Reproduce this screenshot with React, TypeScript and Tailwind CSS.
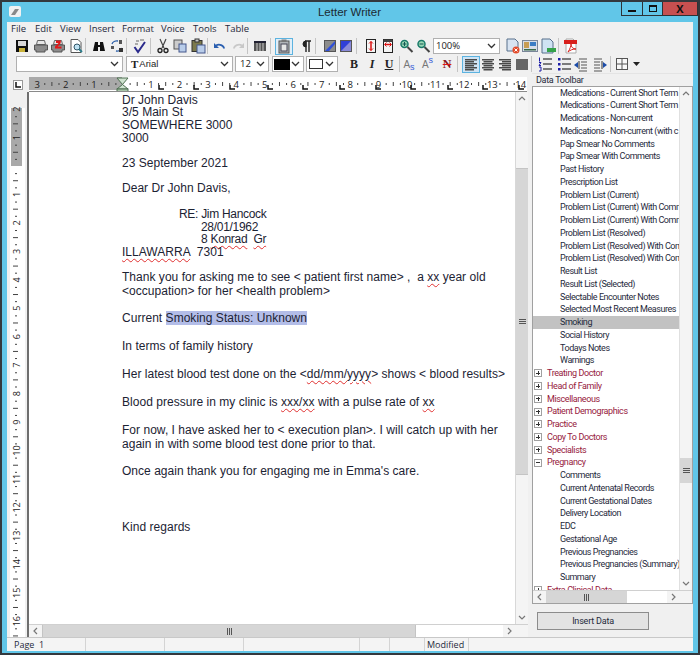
import React from "react";

const S = ({ children, w = 16 }: { children: React.ReactNode; w?: number }) => (
  <svg width={w} height={16} viewBox={`0 0 ${w} 16`} className="block shrink-0">{children}</svg>
);

const Save = () => <S><rect x="2" y="2" width="12" height="12" fill="#111" /><rect x="4" y="3" width="8" height="5" fill="#d8d8d8" /><rect x="5" y="10" width="6" height="4" fill="#c9b23a" /></S>;
const Print = ({ red }: { red?: boolean }) => <S><path d="M4.500 2.500h7l1 4h-9z" fill="#e6e6e6" stroke="#666" /><path d="M1.500 7h13v5h-2.500v2H3v-2H1.500z" fill="#8c8c8c" stroke="#555" />{red && <path d="M6 2.500h5l-.5 3-3 3h4v2H5v-2l3.500-3.500H6z" fill="#e01818" />}</S>;
const Preview = () => <S><path d="M3 1.500h7l3 3v10H3z" fill="#fff" stroke="#555" /><circle cx="9" cy="9" r="3" fill="#bfe3f4" stroke="#356" /><path d="M11 11l3 3" stroke="#2a7d8c" strokeWidth="1.800" /></S>;
const Binoc = () => <S><path d="M2 13l2-9h3v3h2V4h3l2 9H9V9H7v4z" fill="#111" /></S>;
const Replace = () => <S><path d="M3 6a5 4 0 0 1 6-3" fill="none" stroke="#2a5ea8" strokeWidth="1.300" /><path d="M13 10a5 4 0 0 1-6 3" fill="none" stroke="#2a5ea8" strokeWidth="1.300" /><rect x="10" y="2" width="3" height="4" fill="#555" /><rect x="10" y="10" width="4" height="4" fill="#333" /><rect x="2" y="8" width="3" height="3" fill="#555" /></S>;
const Check = () => <S><path d="M2.500 9l3.500 5 7-10" fill="none" stroke="#2a2a8c" strokeWidth="2" /><path d="M4 3h3M8 2h4M3 6h3" stroke="#666" /></S>;
const Cut = () => <S><path d="M5 1l4 9M11 1L7 10" stroke="#444" strokeWidth="1.200" /><circle cx="5" cy="12.500" r="2" fill="none" stroke="#222" strokeWidth="1.300" /><circle cx="11" cy="12.500" r="2" fill="none" stroke="#222" strokeWidth="1.300" /></S>;
const Copy = () => <S><rect x="2" y="2" width="8" height="9" fill="#ccc" stroke="#555" /><rect x="7" y="6" width="7" height="8" fill="#b9cdea" stroke="#44578c" /></S>;
const Paste = () => <S><rect x="2" y="2.500" width="10" height="11" fill="#7c7a4d" stroke="#333" /><rect x="5" y="1" width="4" height="3" fill="#ccc" stroke="#333" /><rect x="7" y="7" width="8" height="8" fill="#b9cdea" stroke="#44578c" /></S>;
const Undo = () => <S><path d="M4 7.500a5 4 0 0 1 8 3" fill="none" stroke="#2a5fb0" strokeWidth="1.800" /><path d="M2 5v5h5z" fill="#2a5fb0" /></S>;
const Redo = () => <S><path d="M12 7.500a5 4 0 0 0-8 3" fill="none" stroke="#c8c8c8" strokeWidth="1.800" /><path d="M14 5v5H9z" fill="#c8c8c8" /></S>;
const Columns = () => <S><rect x="2" y="3" width="12" height="10" fill="#555" /><rect x="2" y="3" width="12" height="2" fill="#223" /><path d="M5 5v8M8 5v8M11 5v8" stroke="#ccc" /></S>;
const PageBox = () => <S><rect x="3" y="3" width="10" height="12" fill="#b0b4b8" stroke="#555" /><rect x="5.500" y="1.500" width="5" height="2.500" fill="#777" /><rect x="5" y="6" width="6" height="7" fill="#e6e6e6" stroke="#445" /></S>;
const Pilcrow = () => <S><path d="M7 3h6M8 3v11M11 3v11" stroke="#222" strokeWidth="1.400" /><path d="M8 3a3 3 0 0 0 0 6z" fill="#222" stroke="#222" /></S>;
const Shade = ({ dark }: { dark?: boolean }) => <S><rect x="2.500" y="2.500" width="11" height="11" fill={dark ? "#8a8ad8" : "#8c8c8c"} stroke="#555" />{dark ? <path d="M3 13V3h10z" fill="#2f3fd8" /> : <path d="M3 13L13 3v3l-6 7z" fill="#2f4fd8" />}</S>;
const PageH = () => <S><rect x="3.500" y="1.500" width="9" height="13" fill="#f4f4f4" stroke="#222" /><path d="M8 3.500v9" stroke="#d11" strokeWidth="1.500" /><path d="M6 5.500l2-2 2 2M6 10.500l2 2 2-2" fill="none" stroke="#d11" /></S>;
const PageW = () => <S><rect x="3.500" y="1.500" width="9" height="13" fill="#f4f4f4" stroke="#222" /><rect x="3.500" y="1.500" width="9" height="2.500" fill="#444" /><path d="M5 6.500h6" stroke="#d11" strokeWidth="1.500" /><path d="M6.500 4.500l-2 2 2 2M9.500 4.500l2 2-2 2" fill="none" stroke="#d11" /></S>;
const Zoom = ({ plus }: { plus?: boolean }) => <S><circle cx="6.500" cy="6" r="3.500" fill="#9ad8b4" stroke="#197a6a" strokeWidth="1.500" /><path d="M9.500 9l5 5" stroke="#444" strokeWidth="2" /><path d={plus ? "M4.500 6h4M6.500 4v4" : "M4.500 6h4"} stroke="#155" /></S>;
const DocX = () => <S w={18}><path d="M4 1h8l3 3v9H4z" fill="#d8e4f2" stroke="#58708c" /><circle cx="13" cy="12" r="3.500" fill="#e24b2b" /><path d="M11.500 10.500l3 3M14.500 10.500l-3 3" stroke="#fff" /></S>;
const Photo = () => <S w={18}><rect x="1.500" y="2.500" width="15" height="11" fill="#d7dee8" stroke="#7a8699" /><rect x="3" y="4" width="5" height="6" fill="#c89d54" /><rect x="9" y="4" width="6" height="4" fill="#3b7dc4" /><rect x="3" y="11" width="12" height="1.500" fill="#3b6b4a" /></S>;
const DocG = () => <S w={18}><path d="M3 1h8l3 3v11H3z" fill="#cfe3f3" stroke="#58708c" /><rect x="8" y="10" width="9" height="4" fill="#35a24a" /></S>;
const Pdf = () => <S><path d="M3 1h7l3 3v11H3z" fill="#fff" stroke="#aaa" /><rect x="1" y="2" width="13" height="4" fill="#d8201c" /><path d="M5 14c2-3 3-6 3-8 0 3 2 5 5 5-3 0-6 1-8 3z" fill="none" stroke="#d8201c" /></S>;
const Align = ({ kind }: { kind: "l" | "c" | "r" | "j" }) => {
  if (kind === "j") return <S><rect x="2" y="3" width="12" height="11" fill="#666" /></S>;
  const rows = [3, 5, 7, 9, 11, 13];
  return <S>{rows.map((y, i) => {
    const short = i % 2 === 1;
    const len = short ? 9 : 12;
    const x = kind === "l" ? 2 : kind === "r" ? 14 - len : 8 - len / 2;
    return <rect key={y} x={x} y={y} width={len} height="1.500" fill="#4a4a4a" />;
  })}</S>;
};
const Numbered = () => <S><path d="M6 3h9M6 8h9M6 13h9" stroke="#555" strokeWidth="1.500" /><path d="M2.500 1.500v4M2 6.500h2l-2 3h2M2 11h2v4H2" fill="none" stroke="#1c1ca8" /></S>;
const Bullets = () => <S><path d="M6 3h9M6 8h9M6 13h9" stroke="#555" strokeWidth="1.500" /><rect x="2" y="2" width="2.500" height="2.500" fill="#1c1ca8" /><rect x="2" y="7" width="2.500" height="2.500" fill="#1c1ca8" /><rect x="2" y="12" width="2.500" height="2.500" fill="#1c1ca8" /></S>;
const Outdent = () => <S><path d="M7 3h8M9 6h6M9 9h6M9 12h6M7 15h8" stroke="#555" /><path d="M6 6v6L2 9z" fill="#1c4ca8" /><path d="M7 5v8" stroke="#333" /></S>;
const Indent = () => <S><path d="M1 3h8M1 6h6M1 9h6M1 12h6M1 15h8" stroke="#555" /><path d="M10 6v6l4-3z" fill="#1c4ca8" /><path d="M9 5v8" stroke="#333" /></S>;
const Grid = () => <S><rect x="2.500" y="2.500" width="11" height="11" fill="#f8f8f8" stroke="#555" /><path d="M8 2.500v11M2.500 8h11" stroke="#555" /></S>;

const Sep = ({ c = "mx-[2px]" }: { c?: string }) => <div className={`w-px h-[16px] bg-[#c4c4c4] shrink-0 ${c}`} />;
const Chev = ({ c = "#333" }: { c?: string }) => (
  <svg width="9" height="6" viewBox="0 0 9 6" className="block shrink-0"><path d="M1 1l3.500 3.500L8 1" fill="none" stroke={c} strokeWidth="1.300" /></svg>
);
const Arrow = ({ d }: { d: "u" | "d" | "l" | "r" }) => {
  const p = { u: "M1 5l3-3 3 3", d: "M1 2l3 3 3-3", l: "M5 1L2 4l3 3", r: "M2 1l3 3-3 3" }[d];
  return <svg width="8" height="8" viewBox="0 0 8 8" className="block"><path d={p} fill="none" stroke="#777" strokeWidth="1.200" /></svg>;
};
const Combo = ({ w, children }: { w: string; children?: React.ReactNode }) => (
  <div className={`${w} h-[16px] bg-white border border-[#b0b0b0] flex items-center justify-between pr-[3px] shrink-0`}>
    <div className="flex items-center min-w-0">{children}</div>
    <Chev />
  </div>
);
const Grip = () => <div className="flex gap-px"><i className="block w-px h-[7px] bg-[#555]" /><i className="block w-px h-[7px] bg-[#555]" /><i className="block w-px h-[7px] bg-[#555]" /></div>;
const GripH = () => <div className="flex flex-col gap-px"><i className="block h-px w-[7px] bg-[#555]" /><i className="block h-px w-[7px] bg-[#555]" /><i className="block h-px w-[7px] bg-[#555]" /></div>;

function TopRuler() {
  const cm = 28.45, zero = 93.5;
  const ticks: React.ReactNode[] = [];
  for (let i = -3; i <= 14; i++) {
    const x = zero + i * cm;
    for (let k = 1; k < 4; k++) {
      const tx = x + (k * cm) / 4;
      if (tx < 490)
        ticks.push(<rect key={`${i}-${k}`} x={tx} y={k === 2 ? 5 : 6} width="1" height={k === 2 ? 4 : 2} fill="#444" />);
    }
    if (i !== 0)
      ticks.push(<text key={i} x={x} y="11" fontSize="9.500" textAnchor="middle" fontFamily="'Open Sans',sans-serif" fill="#222">{Math.abs(i)}</text>);
  }
  const tabs = [130, 165, 201, 239, 274, 311, 347, 382, 419, 454, 490];
  return (
    <svg width="498" height="15" viewBox="0 0 498 15" className="block">
      <rect width="498" height="15" fill="#fff" />
      <rect width="93" height="13" y="0" fill="#a9a9a9" />
      {ticks}
      {tabs.map(t => <path key={t} d="M0 8v4h5" transform={`translate(${t} 0)`} fill="none" stroke="#111" strokeWidth="1.500" />)}
      <path d="M88 1h11l-5.500 6.500zM93.500 7.500L88 12h11z" fill="#cfe3cf" stroke="#4f6f52" />
      <rect x="88" y="12" width="11" height="3" fill="#a8c4a8" stroke="#4f6f52" />
      <rect y="14" width="498" height="1" fill="#8a8a8a" />
    </svg>
  );
}
function LeftRuler() {
  const cm = 28.45, zero = 166;
  const items: React.ReactNode[] = [];
  for (let i = -2; i <= 17; i++) {
    const y = zero + i * cm - 92;
    for (let k = 1; k < 4; k++) {
      const ty = y + (k * cm) / 4;
      if (ty > 14) items.push(<rect key={`${i}-${k}`} x={k === 2 ? 6 : 8} y={ty} width={k === 2 ? 5 : 2} height="1" fill="#444" />);
    }
    if (i !== 0 && y > 10)
      items.push(<text key={i} x="9" y={y + 4} fontSize="9" textAnchor="middle" transform={`rotate(-90 9 ${y})`} fontFamily="'Open Sans',sans-serif" fill="#222">{Math.abs(i)}</text>);
  }
  return (
    <svg width="20" height="545" viewBox="0 0 20 545" className="block shrink-0">
      <rect width="20" height="545" fill="#f0f0f0" />
      <rect x="3" y="0" width="15" height="545" fill="#fff" />
      <rect x="3" y="0" width="15" height="16" fill="#f0f0f0" />
      <rect x="4" y="16" width="11" height="58" fill="#a9a9a9" />
      {items}
    </svg>
  );
}

const Sq = ({ children }: { children: React.ReactNode }) => (
  <span className="underline decoration-wavy decoration-[#e03030] decoration-1 underline-offset-2">{children}</span>
);

const leaves1 = [
  "Medications - Current Short Term", "Medications - Current Short Term", "Medications - Non-current", "Medications - Non-current (with c",
  "Pap Smear No Comments", "Pap Smear With Comments", "Past History", "Prescription List", "Problem List (Current)",
  "Problem List (Current) With Comm", "Problem List (Current) With Comm", "Problem List (Resolved)", "Problem List (Resolved) With Com",
  "Problem List (Resolved) With Com", "Result List", "Result List (Selected)", "Selectable Encounter Notes", "Selected Most Recent Measures",
  "Smoking", "Social History", "Todays Notes", "Warnings",
];
const groups = ["Treating Doctor", "Head of Family", "Miscellaneous", "Patient Demographics", "Practice", "Copy To Doctors", "Specialists"];
const leaves2 = ["Comments", "Current Antenatal Records", "Current Gestational Dates", "Delivery Location", "EDC", "Gestational Age", "Previous Pregnancies", "Previous Pregnancies (Summary)", "Summary"];

const Box = ({ open }: { open?: boolean }) => (
  <span className="w-[8px] h-[8px] border border-[#a0a0a0] bg-white flex items-center justify-center relative shrink-0">
    <i className="block w-[4px] h-px bg-[#333]" />
    {!open && <i className="absolute left-[2.500px] top-[1px] block w-px h-[4px] bg-[#333]" />}
  </span>
);
const Leaf = ({ t, sel }: { t: string; sel?: boolean }) => (
  <div className={`h-[12.760px] leading-[12.760px] pl-[27px] whitespace-nowrap tracking-[-0.450px] text-[#1f2a3c] ${sel ? "bg-[#c2c2c2]" : ""}`}>{t}</div>
);
const Group = ({ t, open }: { t: string; open?: boolean }) => (
  <div className="h-[12.760px] flex items-center whitespace-nowrap tracking-[-0.400px] text-[#96203c] leading-[12.760px]">
    <span className="ml-[1px] mr-[5px]"><Box open={open} /></span>{t}
  </div>
);

export default function App() {
  return (
    <div className="w-[700px] h-[655px] bg-[#33383d] p-[2px] overflow-hidden font-['Open_Sans',sans-serif]">
      <div className="h-full bg-[#61c6e8] flex flex-col">
        <div className="h-[20px] flex items-start relative shrink-0">
          <div className="ml-[7px] mt-[4px] w-[12px] h-[11px] bg-[#f2f2f2] rounded-[2px] flex items-center justify-center">
            <svg width="10" height="8" viewBox="0 0 10 8"><path d="M1 7l4-6h4L5 7z" fill="#8a8a8a" /></svg>
          </div>
          <div className="absolute left-0 right-[1px] top-[2px] text-center font-['Liberation_Sans',sans-serif] text-[11.500px] leading-[17px] text-[#1c2a33]">Letter Writer</div>
          <div className="ml-auto flex h-[14px] border border-t-0 border-[#2d3236]">
            <div className="w-[21px] flex items-end justify-center pb-[3px] border-r border-[#2d3236]"><i className="block w-[8px] h-[2px] bg-[#111]" /></div>
            <div className="w-[20px] flex items-center justify-center border-r border-[#2d3236]"><i className="block w-[8px] h-[7px] border border-t-2 border-[#111]" /></div>
            <div className="w-[34px] bg-[#c75050] flex items-center justify-center text-[11px] font-bold leading-none text-[#111]">X</div>
          </div>
        </div>
        <div className="flex-1 mx-[5px] mb-[2px] bg-[#f0f0f0] flex flex-col min-h-0 font-['Roboto',sans-serif] text-[9px] text-[#222]">
          <div className="h-[15px] flex items-center font-['Open_Sans',sans-serif] text-[9.500px] pl-[4px] shrink-0 text-[#1f2a3c]">
            <span className="w-[24px]">File</span><span className="w-[25px]">Edit</span><span className="w-[29px]">View</span><span className="w-[33px]">Insert</span><span className="w-[39px]">Format</span><span className="w-[32px]">Voice</span><span className="w-[32px]">Tools</span><span>Table</span>
          </div>
          <div className="h-[18px] flex items-center pl-[7px] shrink-0">
            <Save /><span className="w-[3px]" /><Print /><span className="w-px" /><Print red /><span className="w-[2px]" /><Preview />
            <Sep c="mx-[1px]" /><span className="w-[4px]" /><Binoc /><span className="w-[2px]" /><Replace />
            <Sep c="mx-[1px]" /><span className="w-[4px]" /><Check /><span className="w-px" />
            <Sep c="mx-[1px]" /><span className="w-[3px]" /><Cut /><span className="w-px" /><Copy /><span className="w-[2px]" /><Paste />
            <Sep c="mx-[1px]" /><span className="w-[3px]" /><Undo /><span className="w-[2px]" /><Redo />
            <Sep c="mx-[1px]" /><span className="w-[3px]" /><Columns />
            <Sep c="ml-[2px] mr-[2px]" /><span className="w-[2px]" />
            <div className="w-[18px] h-[17px] border border-[#5cb3e0] bg-[#e0eef8] flex items-center justify-center mr-[5px] shrink-0"><PageBox /></div>
            <Pilcrow /><Sep c="ml-[1px] mr-[6px]" /><Shade /><Shade dark />
            <Sep c="mx-[2px]" /><span className="w-[4px]" /><PageH /><span className="w-px" /><PageW /><span className="w-[2px]" /><Zoom plus /><span className="w-px" /><Zoom />
            <span className="w-[2px]" />
            <Combo w="w-[67px]"><span className="pl-[2px] font-['Open_Sans',sans-serif] text-[9.500px] leading-none">100%</span></Combo>
            <span className="w-[3px]" /><DocX /><Photo /><DocG /><Sep c="mx-[1px]" /><span className="w-[3px]" /><Pdf />
          </div>
          <div className="h-[18px] flex items-center pl-[9px] shrink-0">
            <Combo w="w-[107px]" /><span className="w-[3px]" />
            <Combo w="w-[107px]">
              <span className="pl-[4px] font-['Liberation_Serif',serif] text-[11px] font-bold leading-none mr-[1px]">T</span>
              <span className="font-['Liberation_Sans',sans-serif] text-[9.500px] leading-none">Arial</span>
            </Combo>
            <span className="w-[2px]" />
            <Combo w="w-[34px]"><span className="pl-[4px] font-['Open_Sans',sans-serif] text-[9.500px] leading-none">12</span></Combo>
            <span className="w-[3px]" />
            <div className="w-[32px] h-[16px] bg-white border border-[#b0b0b0] flex items-center pl-[1px] pr-[3px] justify-between shrink-0"><i className="block w-[16px] h-[11px] bg-black" /><Chev /></div>
            <span className="w-[2px]" />
            <div className="w-[32px] h-[16px] bg-white border border-[#b0b0b0] flex items-center pl-[2px] pr-[3px] justify-between shrink-0"><i className="block w-[14px] h-[10px] bg-white border border-[#333]" /><Chev /></div>
            <span className="w-[7px]" />
            <span className="w-[18px] text-center font-['Liberation_Serif',serif] font-bold text-[12px] text-[#222]">B</span>
            <span className="w-[18px] text-center font-['Liberation_Serif',serif] font-bold italic text-[12px] text-[#222]">I</span>
            <span className="w-[16px] text-center font-['Liberation_Serif',serif] font-bold underline text-[12px] text-[#222]">U</span>
            <Sep c="ml-[2px] mr-0" />
            <span className="w-[18px] text-center font-['Liberation_Sans',sans-serif] text-[10px] text-[#777]">A<sub className="text-[9px] text-[#3a5fd8]">s</sub></span>
            <span className="w-[19px] text-center font-['Liberation_Sans',sans-serif] text-[10px] text-[#777]">A<sup className="text-[9px] text-[#3a5fd8]">s</sup></span>
            <span className="w-[20px] text-center font-['Liberation_Serif',serif] font-bold text-[12px] text-[#8a1818] line-through decoration-[#e01818]">N</span>
            <Sep c="mr-[4px]" />
            <div className="w-[18px] h-[17px] border border-[#5cb3e0] bg-[#cfe4f5] flex items-center justify-center shrink-0"><Align kind="l" /></div>
            <Align kind="c" /><span className="w-[1px]" /><Align kind="r" /><span className="w-[1px]" /><Align kind="j" />
            <Sep c="ml-[1px] mr-[5px]" />
            <Numbered /><span className="w-[3px]" /><Bullets /><Outdent /><span className="w-[5px]" /><Indent />
            <Sep c="ml-[1px] mr-[3px]" />
            <Grid /><span className="w-[2px]" /><svg width="8" height="5" viewBox="0 0 8 5" className="ml-px"><path d="M0 0h7L3.500 4z" fill="#222" /></svg>
          </div>
          <div className="flex-1 flex min-h-0">
            <div className="w-[521px] flex flex-col shrink-0 min-h-0">
              <div className="h-[19px] flex items-end shrink-0">
                <div className="w-[22px] h-[15px] flex items-center justify-center">
                  <div className="w-[10px] h-[10px] bg-white border border-[#999] flex items-center justify-center"><svg width="6" height="6" viewBox="0 0 6 6"><path d="M1 0v5h5" fill="none" stroke="#111" strokeWidth="1.500" /></svg></div>
                </div>
                <TopRuler />
              </div>
              <div className="flex-1 flex min-h-0">
                <LeftRuler />
                <div className="w-[2px] bg-[#6e6e6e] shrink-0" />
                <div className="flex-1 flex flex-col min-w-0 min-h-0">
                  <div className="flex-1 flex min-h-0">
                    <div className="flex-1 bg-white pl-[93px] pt-[1.500px] font-['Liberation_Sans',sans-serif] text-[12px] tracking-[0.030px] text-[#1c2333] whitespace-pre overflow-hidden">
                      <div className="leading-[12.700px]">
                        <p>Dr John Davis</p>
                        <p>3/5 Main St</p>
                        <p>SOMEWHERE 3000</p>
                        <p>3000</p>
                        <p>&nbsp;</p>
                        <p>23 September 2021</p>
                        <p>&nbsp;</p>
                        <p>Dear Dr John Davis,</p>
                        <p>&nbsp;</p>
                        <p className="pl-[57px] tracking-[-0.300px]">RE: Jim Hancock</p>
                        <p className="pl-[79px] tracking-[-0.300px]">28/01/1962</p>
                        <p className="pl-[79px] tracking-[-0.300px]">8 <Sq>Konrad</Sq>  <Sq>Gr</Sq></p>
                        <p><Sq>ILLAWARRA</Sq>  7301</p>
                      </div>
                      <div className="leading-[13.900px] mt-[12px]">
                        <p>Thank you for asking me to see &lt; patient first name&gt; ,  a <Sq>xx</Sq> year old</p>
                        <p>&lt;occupation&gt; for her &lt;health problem&gt;</p>
                        <p>&nbsp;</p>
                        <p>Current <span className="bg-[#b3bde8]">Smoking Status: Unknown</span></p>
                        <p>&nbsp;</p>
                        <p>In terms of family history</p>
                        <p>&nbsp;</p>
                        <p>Her latest blood test done on the &lt;<Sq>dd/mm/yyyy</Sq>&gt; shows &lt; blood results&gt;</p>
                        <p>&nbsp;</p>
                        <p>Blood pressure in my clinic is <Sq>xxx/xx</Sq> with a pulse rate of <Sq>xx</Sq></p>
                        <p>&nbsp;</p>
                        <p>For now, I have asked her to &lt; execution plan&gt;. I will catch up with her</p>
                        <p>again in with some blood test done prior to that.</p>
                        <p>&nbsp;</p>
                        <p>Once again thank you for engaging me in Emma's care.</p>
                        <p>&nbsp;</p>
                        <p>&nbsp;</p>
                        <p>&nbsp;</p>
                        <p>Kind regards</p>
                      </div>
                    </div>
                    <div className="w-[13px] bg-[#f4f4f4] border-l border-[#d8d8d8] flex flex-col shrink-0">
                      <div className="h-[13px] flex items-center justify-center shrink-0"><Arrow d="u" /></div>
                      <div className="flex-1 flex flex-col">
                        <div className="h-[63px]" />
                        <div className="h-[307px] bg-[#d6d6d6] border-y border-[#c4c4c4] flex items-center justify-center"><GripH /></div>
                      </div>
                      <div className="h-[13px] flex items-center justify-center shrink-0"><Arrow d="d" /></div>
                    </div>
                  </div>
                  <div className="h-[13px] flex bg-[#f4f4f4] shrink-0 border-t border-[#d0d0d0]">
                    <div className="w-[13px] flex items-center justify-center"><Arrow d="l" /></div>
                    <div className="w-[374px] bg-[#d6d6d6] border-x border-[#c4c4c4] flex items-center justify-center"><Grip /></div>
                    <div className="w-[87px] bg-white" />
                    <div className="w-[13px] flex items-center justify-center"><Arrow d="r" /></div>
                  </div>
                </div>
              </div>
            </div>
            <div className="flex-1 flex flex-col pl-[4px] min-w-0">
              <div className="h-[13px] pl-[4px] leading-[12px] tracking-[-0.300px] text-[#1f2a3c] shrink-0 border-t border-[#e4e4e4]">Data Toolbar</div>
              <div className="h-[518px] w-[161px] border border-[#a0a0a0] bg-white flex flex-col shrink-0">
                <div className="flex-1 flex min-h-0">
                  <div className="flex-1 overflow-hidden min-w-0 bg-white">
                    <div className="-mt-[0.400px]">
                      {leaves1.map((t, i) => <Leaf key={i} t={t} sel={t === "Smoking"} />)}
                      {groups.map(t => <Group key={t} t={t} />)}
                      <Group t="Pregnancy" open />
                      {leaves2.map(t => <Leaf key={t} t={t} />)}
                      <Group t="Extra Clinical Data" />
                    </div>
                  </div>
                  <div className="w-[13px] bg-[#f4f4f4] flex flex-col shrink-0 border-l border-[#e0e0e0]">
                    <div className="h-[13px] flex items-center justify-center shrink-0"><Arrow d="u" /></div>
                    <div className="flex-1 flex flex-col">
                      <div className="h-[358px]" />
                      <div className="h-[25px] bg-[#d6d6d6] flex items-center justify-center"><GripH /></div>
                    </div>
                    <div className="h-[13px] flex items-center justify-center shrink-0"><Arrow d="d" /></div>
                  </div>
                </div>
                <div className="h-[13px] flex bg-[#f4f4f4] shrink-0 border-t border-[#d0d0d0]">
                  <div className="w-[13px] flex items-center justify-center"><Arrow d="l" /></div>
                  <div className="w-[81px] bg-[#d6d6d6] flex items-center justify-center"><Grip /></div>
                  <div className="w-[40px] bg-white" />
                  <div className="w-[13px] flex items-center justify-center"><Arrow d="r" /></div>
                </div>
              </div>
              <div className="pl-[5px] pt-[8px]">
                <div className="w-[112px] h-[18px] pt-[1px] border border-[#8c8c8c] bg-[#e3e3e3] flex items-center justify-center tracking-[-0.200px] text-[#1f2a3c]">Insert Data</div>
              </div>
            </div>
          </div>
          <div className="h-[14px] bg-[#f4f4f4] border-t border-[#c8c8c8] flex items-center font-['Open_Sans',sans-serif] text-[9px] shrink-0 text-[#1f2a3c]">
            <div className="w-[79px] pl-[7px] border-r border-[#d4d4d4] h-full leading-[13px] whitespace-pre">Page  1</div>
            <div className="w-[79px] border-r border-[#d4d4d4] h-full" />
            <div className="w-[79px] border-r border-[#d4d4d4] h-full" />
            <div className="w-[116px] border-r border-[#d4d4d4] h-full" />
            <div className="w-[30px] border-r border-[#d4d4d4] h-full" />
            <div className="w-[35px] border-r border-[#d4d4d4] h-full" />
            <div className="w-[44px] pl-[2px] border-r border-[#d4d4d4] h-full leading-[13px]">Modified</div>
          </div>
        </div>
      </div>
    </div>
  );
}
